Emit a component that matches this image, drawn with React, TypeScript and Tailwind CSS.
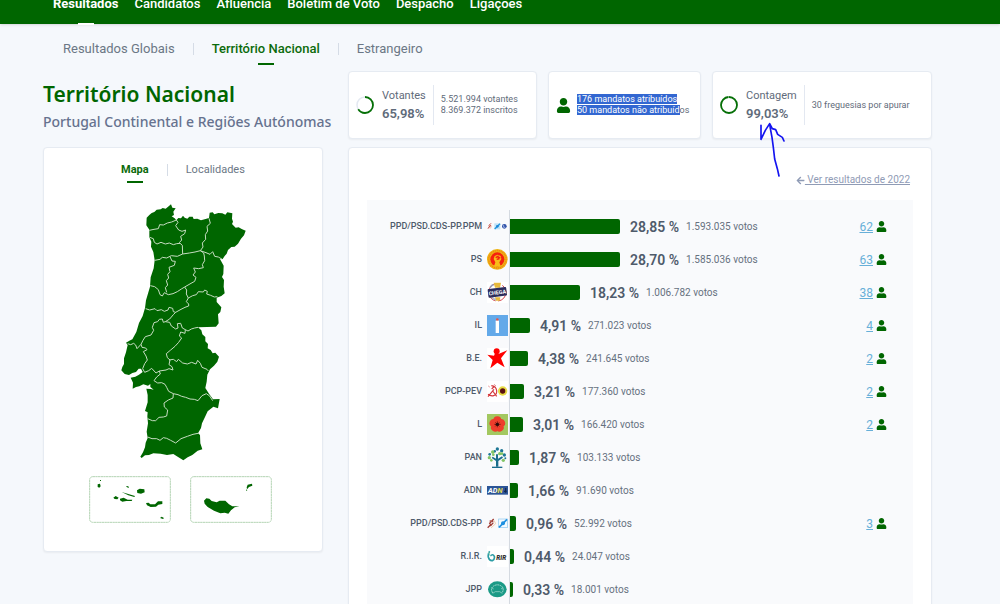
import type { ReactNode } from "react";
import clsx from "clsx";
import { FaArrowLeft, FaUser } from "react-icons/fa";

interface Party {
  name: string;
  pct: string;
  share: number;
  votes: string;
  seats?: number;
  logo: ReactNode;
}

const mainNav = ["Resultados", "Candidatos", "Afluência", "Boletim de Voto", "Despacho", "Ligações"];
const subNav = ["Resultados Globais", "Território Nacional", "Estrangeiro"];

const psdMark = (
  <>
    <path d="M3 38 L8 30 L6 28 L12 22 M7 34 L12 27" fill="none" stroke="#c4483c" strokeWidth="3" />
    <path d="M9 38 L14 31" stroke="#f0a080" strokeWidth="2" />
    <rect x="22" y="22" width="18" height="18" fill="#bfe2f7" />
    <path d="M23 39 L39 23" stroke="#2196dd" strokeWidth="4" />
    <circle cx="31" cy="31" r="4" fill="#1b87d6" />
  </>
);

const petals = [0, 72, 144, 216, 288];

const parties: Party[] = [
  {
    name: "PPD/PSD.CDS-PP.PPM", pct: "28,85 %", share: 28.85, votes: "1.593.035 votos", seats: 62,
    logo: (
      <>
        {psdMark}
        <circle cx="52" cy="31" r="7" fill="#2d4fa8" />
        <path d="M50 27 V34 H55" fill="none" stroke="#cfdcf5" strokeWidth="2" />
      </>
    ),
  },
  {
    name: "PS", pct: "28,70 %", share: 28.7, votes: "1.585.036 votos", seats: 63,
    logo: (
      <>
        <circle cx="31" cy="31" r="31" fill="#efb410" />
        <circle cx="31" cy="31" r="26" fill="none" stroke="#ee7a1c" strokeWidth="4" strokeDasharray="3 3" />
        <circle cx="31" cy="31" r="21" fill="#f5220f" />
        <path d="M21 52 L25 40 L20 30 L23 21 L32 17 L41 21 L43 30 L37 40 L41 52 Z" fill="#f8bd18" />
        <path d="M26 26 L33 22 L35 30 L29 31 M35 24 L40 28" fill="none" stroke="#f5220f" strokeWidth="4" />
      </>
    ),
  },
  {
    name: "CH", pct: "18,23 %", share: 18.23, votes: "1.006.782 votos", seats: 38,
    logo: (
      <>
        <rect width="63" height="63" fill="#fff" />
        <circle cx="31" cy="31" r="26" fill="none" stroke="#d6434b" strokeWidth="3" strokeDasharray="38 8" />
        <path d="M20 2 H42 L39 17 H24 Z" fill="#e6b93c" />
        <path d="M24 46 H40 L38 56 H26 Z" fill="#e6b93c" />
        <path d="M13 44 Q20 53 27 53" fill="none" stroke="#b4b8c8" strokeWidth="5" />
        <path d="M9 17 Q14 9 20 8" fill="none" stroke="#9aa0b8" strokeWidth="5" />
        <rect x="3" y="18" width="56" height="26" rx="3" fill="#2c2c5c" transform="rotate(-7 31 31)" />
        <text x="31" y="37" fontSize="16" fontWeight="700" textAnchor="middle" fill="#fff" transform="rotate(-7 31 31)">
          CHEGA
        </text>
      </>
    ),
  },
  {
    name: "IL", pct: "4,91 %", share: 4.91, votes: "271.023 votos", seats: 4,
    logo: (
      <>
        <rect width="63" height="63" fill="#63a9e9" />
        <rect x="26" y="20" width="10" height="34" fill="#fff" />
        <circle cx="31" cy="14" r="4" fill="#e5534a" />
        <path d="M26 19 H36" stroke="#fff" strokeWidth="4" />
      </>
    ),
  },
  {
    name: "B.E.", pct: "4,38 %", share: 4.38, votes: "241.645 votos", seats: 2,
    logo: (
      <>
        <rect width="63" height="63" fill="#fff" />
        <circle cx="29" cy="10" r="9" fill="#f00" />
        <path d="M24 16 L36 17 L61 7 L42 31 L53 58 L31 44 L10 61 L17 36 L1 20 L21 23 Z" fill="#f00" />
      </>
    ),
  },
  {
    name: "PCP-PEV", pct: "3,21 %", share: 3.21, votes: "177.360 votos", seats: 2,
    logo: (
      <>
        <rect width="63" height="63" fill="#fff" />
        <path d="M13 14 C32 16 34 40 20 44 C13 46 7 43 3 40 M3 47 L21 25 M14 24 L20 18 M17 30 L29 46" fill="none" stroke="#d4383c" strokeWidth="3.5" />
        <path d="M4 15 L8 18 M22 10 L26 15" stroke="#d4383c" strokeWidth="2" />
        <circle cx="47" cy="30" r="14" fill="#e8dc45" />
        <circle cx="47" cy="30" r="8" fill="#5a1010" />
      </>
    ),
  },
  {
    name: "L", pct: "3,01 %", share: 3.01, votes: "166.420 votos", seats: 2,
    logo: (
      <>
        <rect width="63" height="63" fill="#a3c860" />
        {petals.map((deg) => (
          <circle key={deg} cx="31" cy="19" r="12" fill="#ee3d2c" transform={`rotate(${deg} 31 31)`} />
        ))}
        <path d="M31 22 V40 M22 31 H41 M25 25 L37 37 M37 25 L25 37" stroke="#46100c" strokeWidth="2" />
        <circle cx="31" cy="31" r="5" fill="#2b0a0a" />
      </>
    ),
  },
  {
    name: "PAN", pct: "1,87 %", share: 1.87, votes: "103.133 votos",
    logo: (
      <>
        <path d="M27 59 V42 L14 33 L17 29 L27 35 V22 H33 V35 L45 28 L48 32 L34 42 V59 Z" fill="#1b6e8c" />
        <path d="M15 61 H46" stroke="#1b6e8c" strokeWidth="4" />
        <g fill="#1f7896">
          <circle cx="31" cy="6" r="5" />
          <circle cx="44" cy="11" r="5" />
          <circle cx="52" cy="24" r="5" />
          <circle cx="8" cy="22" r="4" />
          <circle cx="23" cy="13" r="4" />
          <circle cx="55" cy="34" r="3" />
        </g>
        <g fill="#83c565">
          <circle cx="17" cy="15" r="5" />
          <circle cx="38" cy="20" r="5" />
          <circle cx="7" cy="32" r="5" />
          <circle cx="19" cy="23" r="4" />
          <circle cx="45" cy="20" r="4" />
          <circle cx="49" cy="40" r="5" />
          <circle cx="13" cy="40" r="4" />
        </g>
      </>
    ),
  },
  {
    name: "ADN", pct: "1,66 %", share: 1.66, votes: "91.690 votos",
    logo: (
      <>
        <rect y="18" width="63" height="26" fill="#2c5596" />
        <text x="3" y="39" fontSize="22" fontWeight="700" fontStyle="italic" fill="#fff">
          AD<tspan fill="#e9e04a">N</tspan>
        </text>
        <path d="M51 34 H59 M56 24 V38" stroke="#14284e" strokeWidth="4" />
      </>
    ),
  },
  {
    name: "PPD/PSD.CDS-PP", pct: "0,96 %", share: 0.96, votes: "52.992 votos", seats: 3,
    logo: (
      <>
        <path d="M2 44 L11 35 L8 31 L20 18 M8 24 L19 25 M10 39 L19 29" fill="none" stroke="#a03c34" strokeWidth="4" />
        <path d="M12 45 L26 32 L21 22" fill="none" stroke="#f7cfae" strokeWidth="3" />
        <rect x="35" y="18" width="26" height="26" fill="#f3faff" stroke="#8cc6ee" strokeWidth="2" />
        <path d="M36 43 L60 19" stroke="#1d8fe0" strokeWidth="5" />
        <circle cx="48" cy="31" r="6" fill="#1d8fe0" />
      </>
    ),
  },
  {
    name: "R.I.R.", pct: "0,44 %", share: 0.44, votes: "24.047 votos",
    logo: (
      <>
        <rect width="63" height="63" fill="#fff" />
        <path d="M8 16 Q2 24 4 34 Q7 45 16 44 Q24 40 22 31 Q17 22 10 30" fill="none" stroke="#2d9da6" strokeWidth="5" />
        <path d="M4 18 L10 30" stroke="#8fd0b8" strokeWidth="3" />
        <text x="28" y="43" fontSize="19" fontWeight="900" fontStyle="italic" fill="#333">
          RIR
        </text>
      </>
    ),
  },
  {
    name: "JPP", pct: "0,33 %", share: 0.33, votes: "18.001 votos",
    logo: (
      <>
        <ellipse cx="31" cy="31" rx="28" ry="24" fill="#1b9a86" />
        <path d="M17 42 Q9 28 20 21 Q31 14 43 21 Q53 28 45 42" fill="none" stroke="#a8ddd2" strokeWidth="3" strokeDasharray="5 2" />
        <path d="M17 43 L25 38 H38 L46 43 M14 26 L20 30 M48 26 L42 30" fill="none" stroke="#a8ddd2" strokeWidth="2" />
      </>
    ),
  },
];

const districtBorders = [
  "118 241 132 238 145 236 149 224 160 225 172 219 185 216 199 210",
  "199 210 204 217 197 227 206 240 216 244 227 240 224 251 212 259 215 270 208 278 217 286 218 312",
  "119 262 130 266 133 277 141 282 153 277 166 282 178 279 190 284 200 281 210 280",
  "297 205 301 220 291 229 293 243 286 254 287 268 277 279 279 291 271 302",
  "134 331 150 328 157 322 170 324 184 317 202 319 218 312 238 309 255 306 271 302 281 309 283 318",
  "271 302 288 308 300 313 308 305 314 319 325 321 337 328",
  "180 320 186 333 196 334 193 346 177 352 180 365 173 373 176 384 169 392 173 405 166 413 170 427",
  "283 318 284 332 277 344 280 353 266 356 251 354 256 366 249 375 258 382 254 394 243 400 224 411",
  "121 407 134 410 145 419 150 434 157 438 163 428 175 434 189 431 202 425 214 417 224 411",
  "224 411 230 420 229 432 235 444 248 437 259 434 265 425 280 426 284 420 292 424 290 432 302 436 313 441 322 440",
  "235 444 229 455 236 462 236 468 225 472 213 478 197 487 190 494 179 507 166 515",
  "107 476 119 480 135 476 141 482 154 479 163 484 174 480 177 472 188 475 190 485 197 487",
  "166 515 160 517 157 507 148 508 143 515 132 518 127 532 131 541 123 555 106 560 99 571 93 583",
  "53 581 62 584 71 580 77 585 81 596 93 583",
  "93 583 96 592 107 594 111 599 100 605 108 618 112 630 104 641 98 656",
  "166 515 179 517 184 528 197 537 204 534 202 521 212 520 217 534 226 539 225 550 212 546 208 558 215 564 206 577 195 589 182 600 169 611",
  "226 539 234 543 244 537 254 534 264 532",
  "169 611 172 623 180 630 177 644 186 650 189 660 177 656 168 660 148 663 138 669 125 655 116 662 104 667 98 656",
  "177 630 190 628 200 635 205 628 218 639 232 642 245 637 258 642 263 631 271 640 276 652 291 658 295 663",
  "148 663 151 672 140 681 132 692 143 699 155 698 165 703 170 712 176 724 190 731 189 744 175 750 162 759 163 771 173 780 170 798 160 801 147 802 137 812 127 812 113 806",
  "190 731 204 734 215 739 227 742 240 747 253 748 264 752 276 737 289 731 299 738 308 752",
  "113 861 126 866 140 866 150 871 160 863 170 865 182 871 197 879 213 866 232 859 249 853 264 850",
];

const mainlandOutline =
  "M110 203 L118 195 L125 189 L133 186 L140 179 L152 178 L158 174 L167 176 L176 169 L183 163 L187 173 L197 175 L190 185 L192 195 L185 199 L194 205 L199 211 L205 204 L213 205 L219 197 L224 203 L232 206 L238 200 L248 200 L251 207 L262 206 L273 211 L284 208 L297 204 L299 188 L308 187 L313 193 L325 189 L337 190 L346 194 L352 187 L367 190 L366 206 L369 215 L366 222 L377 233 L386 232 L395 237 L407 242 L402 256 L393 266 L384 281 L374 290 L364 291 L354 300 L350 311 L344 318 L338 327 L330 327 L341 347 L340 372 L336 381 L342 390 L341 410 L344 430 L334 438 L320 443 L320 456 L334 472 L331 486 L324 493 L326 520 L318 530 L264 532 L274 541 L277 553 L286 561 L286 574 L294 582 L293 595 L302 600 L308 610 L316 608 L327 620 L322 635 L312 647 L300 658 L292 674 L290 695 L286 714 L297 731 L309 748 L329 747 L324 775 L310 770 L293 784 L285 801 L276 820 L273 834 L264 850 L270 855 L271 880 L277 898 L263 902 L247 915 L233 922 L220 931 L203 920 L190 912 L171 915 L152 911 L130 910 L117 915 L105 916 L95 924 L91 920 L99 907 L105 892 L107 878 L113 864 L110 845 L114 820 L112 799 L113 787 L105 783 L113 757 L113 735 L109 716 L122 717 L131 719 L121 711 L121 702 L114 707 L100 703 L88 709 L78 711 L68 716 L69 698 L62 683 L76 680 L87 674 L98 666 L93 656 L86 656 L78 666 L67 669 L57 675 L44 672 L34 661 L37 651 L42 642 L42 625 L48 607 L53 585 L48 578 L58 572 L67 568 L79 546 L87 519 L98 498 L105 474 L108 451 L120 410 L122 382 L131 355 L134 331 L130 306 L123 290 L124 275 L118 262 L118 239 L109 226 Z";

function Ring({ value }: { value: number }) {
  return (
    <svg viewBox="0 0 18 18" className="size-[18px] shrink-0 -rotate-90">
      <circle cx="9" cy="9" r="8" fill="none" stroke="#e3e8f1" strokeWidth="1.5" />
      <circle cx="9" cy="9" r="8" fill="none" stroke="#067006" strokeWidth="1.8" pathLength="100" strokeDasharray={`${value} 100`} />
    </svg>
  );
}

function Stat({ label, value, pct, children }: { label: string; value: string; pct: number; children: ReactNode }) {
  return (
    <div className="relative flex items-center rounded-sm border border-[#e6ebf2] bg-white pl-[7px] shadow-xs">
      <Ring value={pct} />
      <div className="ml-2 text-[#5f6b7a]">
        <p className="text-[11px] leading-[18px]">{label}</p>
        <p className="text-[13px] leading-[18px] font-semibold">{value}</p>
      </div>
      <div className="ml-[7px] flex h-10 items-center border-l border-[#e3e8f1] pl-[7px]">{children}</div>
    </div>
  );
}

function PortugalMap() {
  return (
    <svg viewBox="30 162 384 774" className="h-[258px] w-32" role="img" aria-label="Portugal Continental">
      <path d={mainlandOutline} fill="#060" />
      {districtBorders.map((points) => (
        <polyline key={points} points={points} fill="none" stroke="#c5dcc0" strokeWidth="3" strokeLinejoin="round" />
      ))}
    </svg>
  );
}

function IslandMaps() {
  return (
    <div className="flex gap-[19px] pl-[45px]">
      <svg viewBox="28 33 246 141" className="h-[47px] w-[82px]" role="img" aria-label="Açores">
        <rect x="30" y="35" width="242" height="137" rx="9" fill="none" stroke="#b4d4b4" strokeWidth="3" strokeDasharray="7 1" />
        <g fill="#060">
          <path d="M54 58 L61 56 L63 64 L59 68 L54 66 Z M61 45 h3 v3 h-3 Z" />
          <path d="M101 98 L108 93 L117 98 L113 103 L105 102 Z M121 101 L132 98 L144 104 L158 104 L156 108 L140 108 L128 110 L121 106 Z" />
          <path d="M126 81 L166 93 L164 96 L146 91 Z M139 63 L146 64 L148 69 L142 67 Z" />
          <path d="M172 76 L180 71 L194 73 L195 82 L184 86 L173 84 Z" />
          <path d="M199 114 L207 113 L212 118 L226 118 L235 109 L248 109 L248 117 L236 119 L229 125 L213 126 L202 121 Z M241 159 L246 155 L253 159 L250 162 Z" />
        </g>
      </svg>
      <svg viewBox="330 33 246 141" className="h-[47px] w-[82px]" role="img" aria-label="Madeira">
        <rect x="332" y="35" width="242" height="137" rx="9" fill="none" stroke="#b4d4b4" strokeWidth="3" strokeDasharray="7 1" />
        <g fill="#060">
          <path d="M372 107 L379 100 L388 101 L395 108 L410 112 L419 107 L436 107 L447 118 L457 124 L478 124 L464 127 L453 136 L445 146 L434 143 L421 145 L402 137 L383 126 L374 116 Z" />
          <path d="M500 67 L503 59 L516 56 L517 62 L507 66 L501 73 Z M498 73 L502 76 L499 78 Z" />
        </g>
      </svg>
    </div>
  );
}

function PartyRow({ party }: { party: Party }) {
  return (
    <div className="flex h-[33px] items-center">
      <span className="w-[115px] shrink-0 text-right text-[9px] font-medium text-[#4f5b6b]">{party.name}</span>
      <svg viewBox="0 0 63 63" className="mr-px ml-[5px] size-[21px] shrink-0" aria-hidden="true">
        {party.logo}
      </svg>
      <div className="flex h-full flex-1 items-center border-l border-[#d5dae1]">
        {/* every bar keeps a 2px stub so the smallest shares stay visible */}
        <div className="h-[15px] rounded-r-xs bg-[#006600]" style={{ width: Math.round(party.share * 3.75 + 2) }} />
        <span className="ml-[10px] text-[14px] leading-5 font-semibold text-[#4f5b6b]">{party.pct}</span>
        <span className="ml-[7px] text-[10px] leading-5 text-[#667180]">{party.votes}</span>
      </div>
      {party.seats && (
        <div className="mr-[26px] flex items-center gap-[3px]">
          <a href="#" className="text-xs text-[#67afd8] underline">
            {party.seats}
          </a>
          <FaUser className="size-[11px] text-[#006600]" />
        </div>
      )}
    </div>
  );
}

export default function App() {
  return (
    <div className="h-screen overflow-hidden bg-[#f5f8fc] font-['Roboto',sans-serif]">
      <header className="h-6 bg-[#006600] pl-[53px] shadow-sm">
        <nav className="flex gap-4 text-[13px] leading-5 text-white">
          {mainNav.map((item, i) => (
            <a key={item} href="#" className={clsx("relative -mt-[6px] h-[31px]", i === 0 ? "font-bold" : "font-medium")}>
              {item}
              {i === 0 && <span className="absolute bottom-0 left-1/2 h-0.5 w-4 -translate-x-1/2 bg-white" />}
            </a>
          ))}
        </nav>
      </header>

      <nav className="flex h-[47px] items-center pt-[3px] pl-[63px] text-[13px] leading-5 text-[#6b7785]">
        {subNav.map((item, i) => (
          <div key={item} className={clsx("flex items-center", i > 0 && "ml-[18px]")}>
            {i > 0 && <span className="mr-[18px] h-3 w-px bg-[#d5dce6]" />}
            <a href="#" className={clsx("relative", i === 1 && "font-medium text-[#0b6b0b]")}>
              {item}
              {i === 1 && <span className="absolute -bottom-[6px] left-1/2 h-0.5 w-4 -translate-x-1/2 bg-[#006600]" />}
            </a>
          </div>
        ))}
      </nav>

      <main className="flex gap-[25px] pr-[68px] pl-[43px]">
        <aside className="w-[280px] shrink-0">
          <div className="h-[76px] pt-2 font-['Noto_Sans','Open_Sans',sans-serif] whitespace-nowrap">
            <h1 className="text-[21px] leading-[30px] font-semibold text-[#006600]">Território Nacional</h1>
            <h2 className="text-[14px] leading-[26px] font-medium text-[#66728f]">Portugal Continental e Regiões Autónomas</h2>
          </div>

          <div className="rounded-sm border border-[#e6ebf2] bg-white pb-[28px] shadow-xs">
            <div className="flex items-center justify-center pt-3 text-[11px] leading-5 text-[#6b7785]">
              <button className="relative font-bold text-[#0b6b0b]">
                Mapa
                <span className="absolute -bottom-[3px] left-1/2 h-0.5 w-4 -translate-x-1/2 bg-[#006600]" />
              </button>
              <span className="mx-[18px] h-3 w-px bg-[#d5dce6]" />
              <button>Localidades</button>
            </div>
            <div className="mt-6 mb-[14px] flex justify-center pl-0.5">
              <PortugalMap />
            </div>
            <IslandMaps />
          </div>
        </aside>

        <section className="min-w-0 flex-1">
          <div className="grid h-[68px] grid-cols-[189fr_153fr_220fr] gap-[11px] text-[9px] leading-[11px] text-[#5f6b7a]">
            <Stat label="Votantes" value="65,98%" pct={65.98}>
              <p>
                5.521.994 votantes
                <br />
                8.369.372 inscritos
              </p>
            </Stat>
            <div className="flex items-center rounded-sm border border-[#e6ebf2] bg-white pl-[7px] shadow-xs">
              <FaUser className="size-[15px] shrink-0 text-[#006600]" />
              <p className="ml-[6px] whitespace-nowrap">
                <span className="bg-[#3367d1] text-white">176 mandatos atribuídos</span>
                <br />
                <span className="bg-[#3367d1] text-white">50 mandatos não atribuíd</span>os
              </p>
            </div>
            <Stat label="Contagem" value="99,03%" pct={99.03}>
              <p>30 freguesias por apurar</p>
              {/* hand-drawn arrow over the counted share */}
              <svg viewBox="350 180 90 180" className="absolute top-[48px] left-[44px] z-10 h-[60px] w-[30px]" aria-hidden="true">
                <path
                  d="M416 348 L411 326 L403 297 L399 262 L395 232 L390 205 L388 191 L375 211 L362 238 L362 196 M388 191 L396 206 L406 209 L412 223 L426 232 L431 243"
                  fill="none"
                  stroke="#1414f0"
                  strokeWidth="5"
                  strokeLinecap="round"
                  strokeLinejoin="round"
                />
              </svg>
            </Stat>
          </div>

          <div className="mt-2 rounded-sm border border-[#e6ebf2] bg-white px-[18px] pt-6 pb-6 shadow-xs">
            <div className="flex justify-end pr-[3px]">
              <a href="#" className="flex items-center text-[10px] leading-4 text-[#8f9bb5]">
                <FaArrowLeft className="size-[9px]" />
                <span className="whitespace-pre underline"> Ver resultados de 2022</span>
              </a>
            </div>
            <div className="mt-3 bg-[#f9fafc] pt-[10px] pb-4">
              {parties.map((party) => (
                <PartyRow key={party.name} party={party} />
              ))}
            </div>
          </div>
        </section>
      </main>
    </div>
  );
}
